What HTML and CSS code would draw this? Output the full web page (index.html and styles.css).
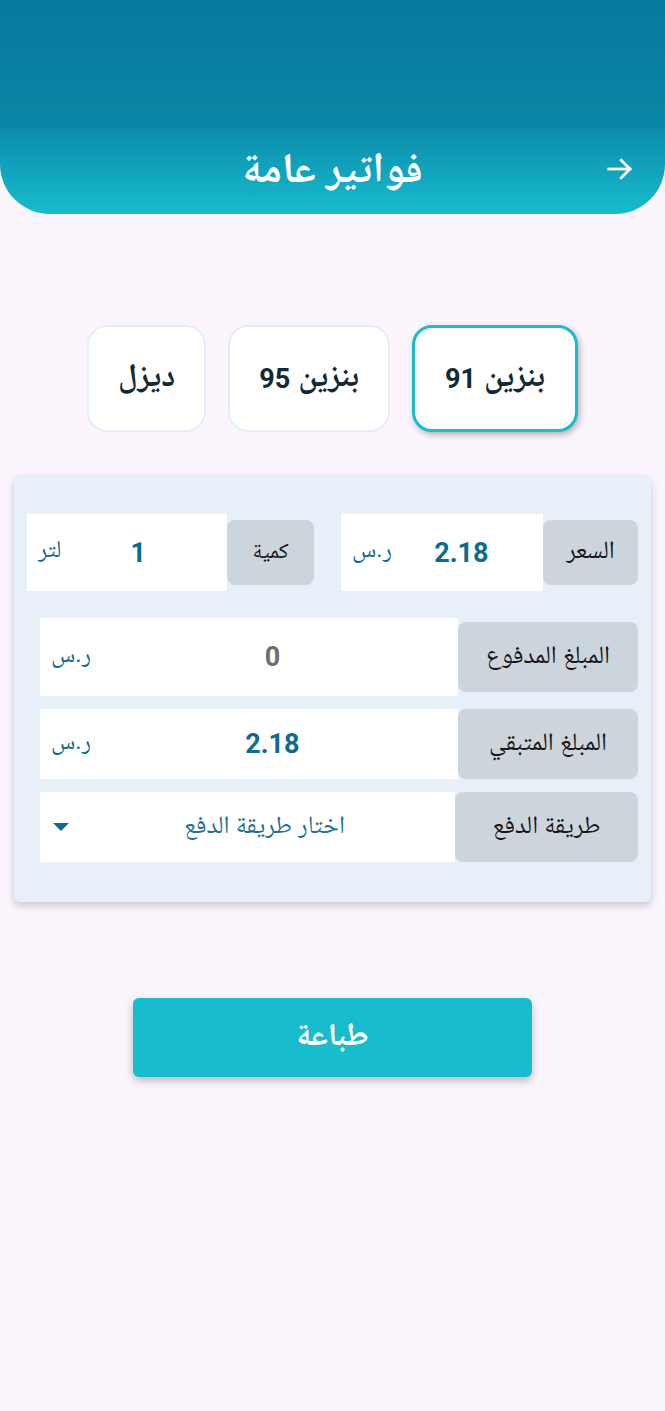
FILE: index.html
```html
<!DOCTYPE html>
<html lang="ar" dir="rtl">
<head>
<meta charset="utf-8">
<title>فواتير عامة</title>
<link rel="stylesheet" href="styles.css">
</head>
<body>
<header class="appbar">
  <div class="appbar-row">
    <button class="back" aria-label="رجوع">
      <svg width="30" height="30" viewBox="0 0 24 24" fill="none" stroke="#ffffff" stroke-width="2.2" stroke-linecap="square"><path d="M3 12h17"/><path d="M13 5l7 7-7 7"/></svg>
    </button>
    <h1 class="title">فواتير عامة</h1>
    <span class="spacer"></span>
  </div>
</header>

<main class="content">
  <div class="fuel-tabs">
    <button class="fuel is-active"><span class="fuel-name">بنزين</span> <span class="fuel-num">91</span></button>
    <button class="fuel"><span class="fuel-name">بنزين</span> <span class="fuel-num">95</span></button>
    <button class="fuel"><span class="fuel-name">ديزل</span></button>
  </div>

  <section class="card">
    <div class="row row-split">
      <div class="group group-price">
        <div class="label label-sm">السعر</div>
        <div class="field field-tall">
          <span class="value">2.18</span>
          <span class="unit">ر.س</span>
        </div>
      </div>
      <div class="group group-qty">
        <div class="label label-sm label-qty">كمية</div>
        <div class="field field-tall">
          <span class="value">1</span>
          <span class="unit">لتر</span>
        </div>
      </div>
    </div>

    <div class="row row-wide row-paid">
      <div class="label label-wide">المبلغ المدفوع</div>
      <div class="field">
        <span class="value value-muted">0</span>
        <span class="unit">ر.س</span>
      </div>
    </div>

    <div class="row row-wide">
      <div class="label label-wide">المبلغ المتبقي</div>
      <div class="field">
        <span class="value">2.18</span>
        <span class="unit">ر.س</span>
      </div>
    </div>

    <div class="row row-wide">
      <div class="label label-wide label-pay">طريقة الدفع</div>
      <div class="field field-select">
        <span class="select-text">اختار طريقة الدفع</span>
        <svg class="caret" width="18" height="10" viewBox="0 0 18 10"><path d="M1 1h16L9 9z" fill="#0e6b8f"/></svg>
      </div>
    </div>
  </section>

  <button class="print">طباعة</button>
</main>
</body>
</html>
```
FILE: styles.css
```css
* { box-sizing: border-box; }

html, body {
  margin: 0;
  padding: 0;
}

body {
  background: #fdf5fd;
  font-family: Roboto, "Noto Naskh Arabic", "Noto Sans Arabic", "DejaVu Sans", sans-serif;
  color: #1b1b1b;
  min-height: 1411px;
}

button {
  font-family: inherit;
  border: 0;
  background: none;
  padding: 0;
  cursor: pointer;
}

/* ---------- app bar ---------- */
.appbar {
  background: linear-gradient(to bottom, #08799e 0, #0b86a7 128px, #0d8eae 132px, #17bccd 214px);
  border-radius: 0 0 50px 50px;
  padding-top: 130px;
}

.appbar-row {
  height: 84px;
  display: grid;
  grid-template-columns: 1fr auto 1fr;
  align-items: center;
}

.back {
  justify-self: start;
  margin-inline-start: 30px;
  display: flex;
  align-items: center;
  margin-top: -6px;
}

.title {
  margin: 0;
  color: #ffffff;
  font-size: 42px;
  font-weight: 700;
  line-height: 1;
  margin-top: -8px;
}

/* ---------- fuel tabs ---------- */
.fuel-tabs {
  margin-top: 111px;
  display: flex;
  justify-content: center;
  gap: 22px;
}

.fuel {
  height: 107px;
  padding: 0 29px;
  background: #ffffff;
  border: 2px solid #e4eef8;
  border-radius: 20px;
  font-weight: 700;
  color: #112a33;
  display: flex;
  align-items: center;
  gap: 8px;
}

.fuel-name { font-size: 32px; }
.fuel-num { font-size: 27px; }

.fuel.is-active {
  border: 3px solid #17bccd;
  box-shadow: 2px 3px 6px rgba(0, 0, 0, 0.28);
  padding: 0 30px;
}

/* ---------- card ---------- */
.card {
  margin: 43px 14px 0;
  background: #e7eff8;
  border-radius: 6px;
  padding: 39px 13px 40px;
  box-shadow: 0 4px 9px rgba(0, 0, 0, 0.2);
}

.row {
  display: flex;
  align-items: center;
}

.row + .row { margin-top: 13px; }
.row-split + .row { margin-top: 27px; }

.row-wide { margin-inline-end: 13px; }

.row-split { gap: 27px; }

.group {
  display: flex;
  align-items: center;
}

.group-price { flex: 0 0 297px; }
.group-qty { flex: 1; }

.label {
  flex: none;
  background: #ccd4dc;
  border-radius: 8px;
  height: 70px;
  display: flex;
  align-items: center;
  justify-content: center;
  font-size: 25px;
  color: #161616;
}

.label-sm { width: 95px; height: 65px; }
.label-qty { width: 87px; font-size: 22px; }
.label-wide { width: 180px; }
.label-pay { width: 183px; }

.field {
  flex: 1;
  background: #ffffff;
  height: 70px;
  display: flex;
  align-items: center;
  padding: 0 12px 0 11px;
}

.field-tall { height: 77px; }
.row-paid .field { height: 78px; }
.row-wide .field { padding-inline-start: 4px; }

.value {
  flex: 1;
  text-align: center;
  font-size: 27px;
  font-weight: 700;
  color: #0e6b8f;
}

.value-muted { color: #6e6e6e; }

.unit {
  font-size: 24px;
  color: #0e6b8f;
  padding-bottom: 2px;
}

.row-wide .field-select { padding: 0 12px; }

.select-text {
  flex: 1;
  text-align: center;
  font-size: 25px;
  color: #1b6f90;
  padding-inline-end: 16px;
}

.caret { flex: none; }

/* ---------- print ---------- */
.print {
  display: block;
  margin: 96px auto 0;
  width: 399px;
  height: 79px;
  background: #17bccd;
  border-radius: 6px;
  color: #ffffff;
  font-size: 32px;
  font-weight: 700;
  box-shadow: 0 4px 8px rgba(0, 0, 0, 0.25);
}
```
